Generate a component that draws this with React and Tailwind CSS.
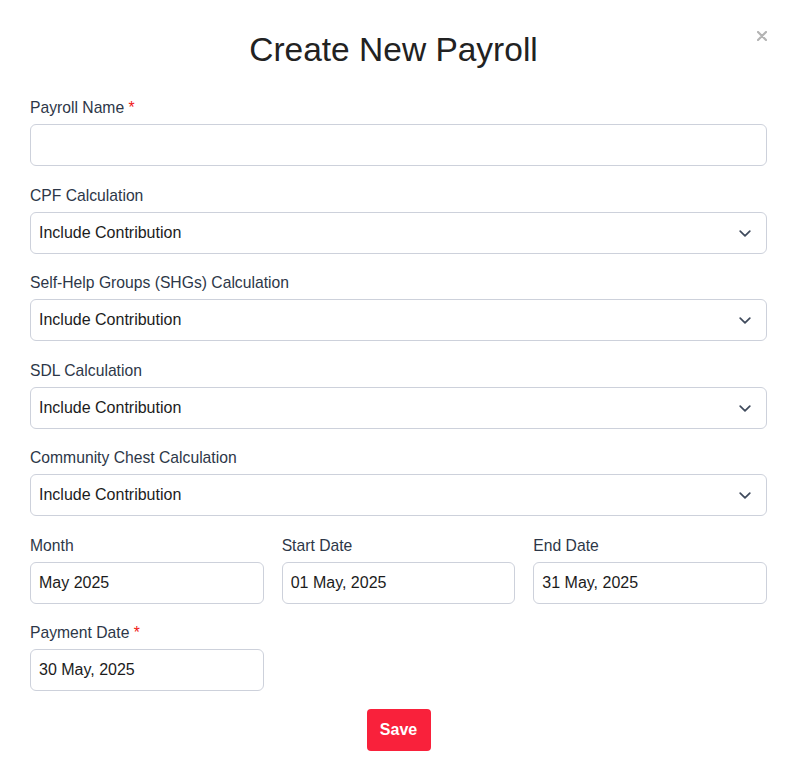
import { useState } from "react";

const OPTIONS = ["Include Contribution", "Exclude Contribution"];

function Label({ children, required }) {
  return (
    <label className="block text-[15.7px] leading-5 text-[#2d3748] mb-[6px]">
      {children}
      {required && <span className="text-[#f01818]"> *</span>}
    </label>
  );
}

function SelectField({ label, value, onChange }) {
  return (
    <div>
      <Label>{label}</Label>
      <div className="relative">
        <select
          value={value}
          onChange={(e) => onChange(e.target.value)}
          className="appearance-none w-full h-[42px] border border-[#cdd1db] rounded-md bg-white px-2 text-[16px] text-[#1c1c1c] outline-none"
        >
          {OPTIONS.map((o) => (
            <option key={o}>{o}</option>
          ))}
        </select>
        <svg
          className="absolute right-[16px] top-[18px] pointer-events-none"
          width="12"
          height="7"
          viewBox="0 0 12 7"
          fill="none"
        >
          <path d="M1.2 1.2l4.8 4.6 4.8-4.6" stroke="#3f4a5c" strokeWidth="1.7" strokeLinecap="round" strokeLinejoin="round" />
        </svg>
      </div>
    </div>
  );
}

function TextField({ label, required, value, onChange }) {
  return (
    <div>
      <Label required={required}>{label}</Label>
      <input
        type="text"
        value={value}
        onChange={(e) => onChange(e.target.value)}
        className="w-full h-[42px] border border-[#cdd1db] rounded-md bg-white px-2 text-[16px] text-[#1c1c1c] outline-none"
      />
    </div>
  );
}

export default function App() {
  const [form, setForm] = useState({
    name: "",
    cpf: "Include Contribution",
    shg: "Include Contribution",
    sdl: "Include Contribution",
    chest: "Include Contribution",
    month: "May 2025",
    start: "01 May, 2025",
    end: "31 May, 2025",
    payment: "30 May, 2025"
  });

  const set = (key) => (v) => setForm({ ...form, [key]: v });

  return (
    <div className="w-[798px] min-h-[776px] bg-white pl-[30px] pr-[31px] pt-[30px] pb-[25px] font-['Liberation_Sans',Arial,sans-serif]">
      {/* Header */}
      <div className="flex items-start">
        <h1 className="flex-1 text-center text-[33.5px] leading-[40px] text-[#222222]">
          Create New Payroll
        </h1>
        <button type="button" className="mt-px" aria-label="Close">
          <svg width="10" height="10" viewBox="0 0 10 10">
            <path d="M1 1l8 8M9 1l-8 8" stroke="#b4b4b4" strokeWidth="2.2" strokeLinecap="round" />
          </svg>
        </button>
      </div>

      {/* Form */}
      <form className="mt-[28px] flex flex-col gap-[19.5px]" onSubmit={(e) => e.preventDefault()}>
        <TextField label="Payroll Name" required value={form.name} onChange={set("name")} />
        <SelectField label="CPF Calculation" value={form.cpf} onChange={set("cpf")} />
        <SelectField label="Self-Help Groups (SHGs) Calculation" value={form.shg} onChange={set("shg")} />
        <SelectField label="SDL Calculation" value={form.sdl} onChange={set("sdl")} />
        <SelectField label="Community Chest Calculation" value={form.chest} onChange={set("chest")} />

        <div className="grid grid-cols-3 gap-[18px]">
          <TextField label="Month" value={form.month} onChange={set("month")} />
          <TextField label="Start Date" value={form.start} onChange={set("start")} />
          <TextField label="End Date" value={form.end} onChange={set("end")} />
        </div>

        <div className="grid grid-cols-3 gap-[18px]">
          <TextField label="Payment Date" required value={form.payment} onChange={set("payment")} />
        </div>

        <div className="flex justify-center -mt-[1.5px]">
          <button
            type="submit"
            className="w-[64px] h-[42px] bg-[#f9213b] rounded text-white font-bold text-[16px]"
          >
            Save
          </button>
        </div>
      </form>
    </div>
  );
}
